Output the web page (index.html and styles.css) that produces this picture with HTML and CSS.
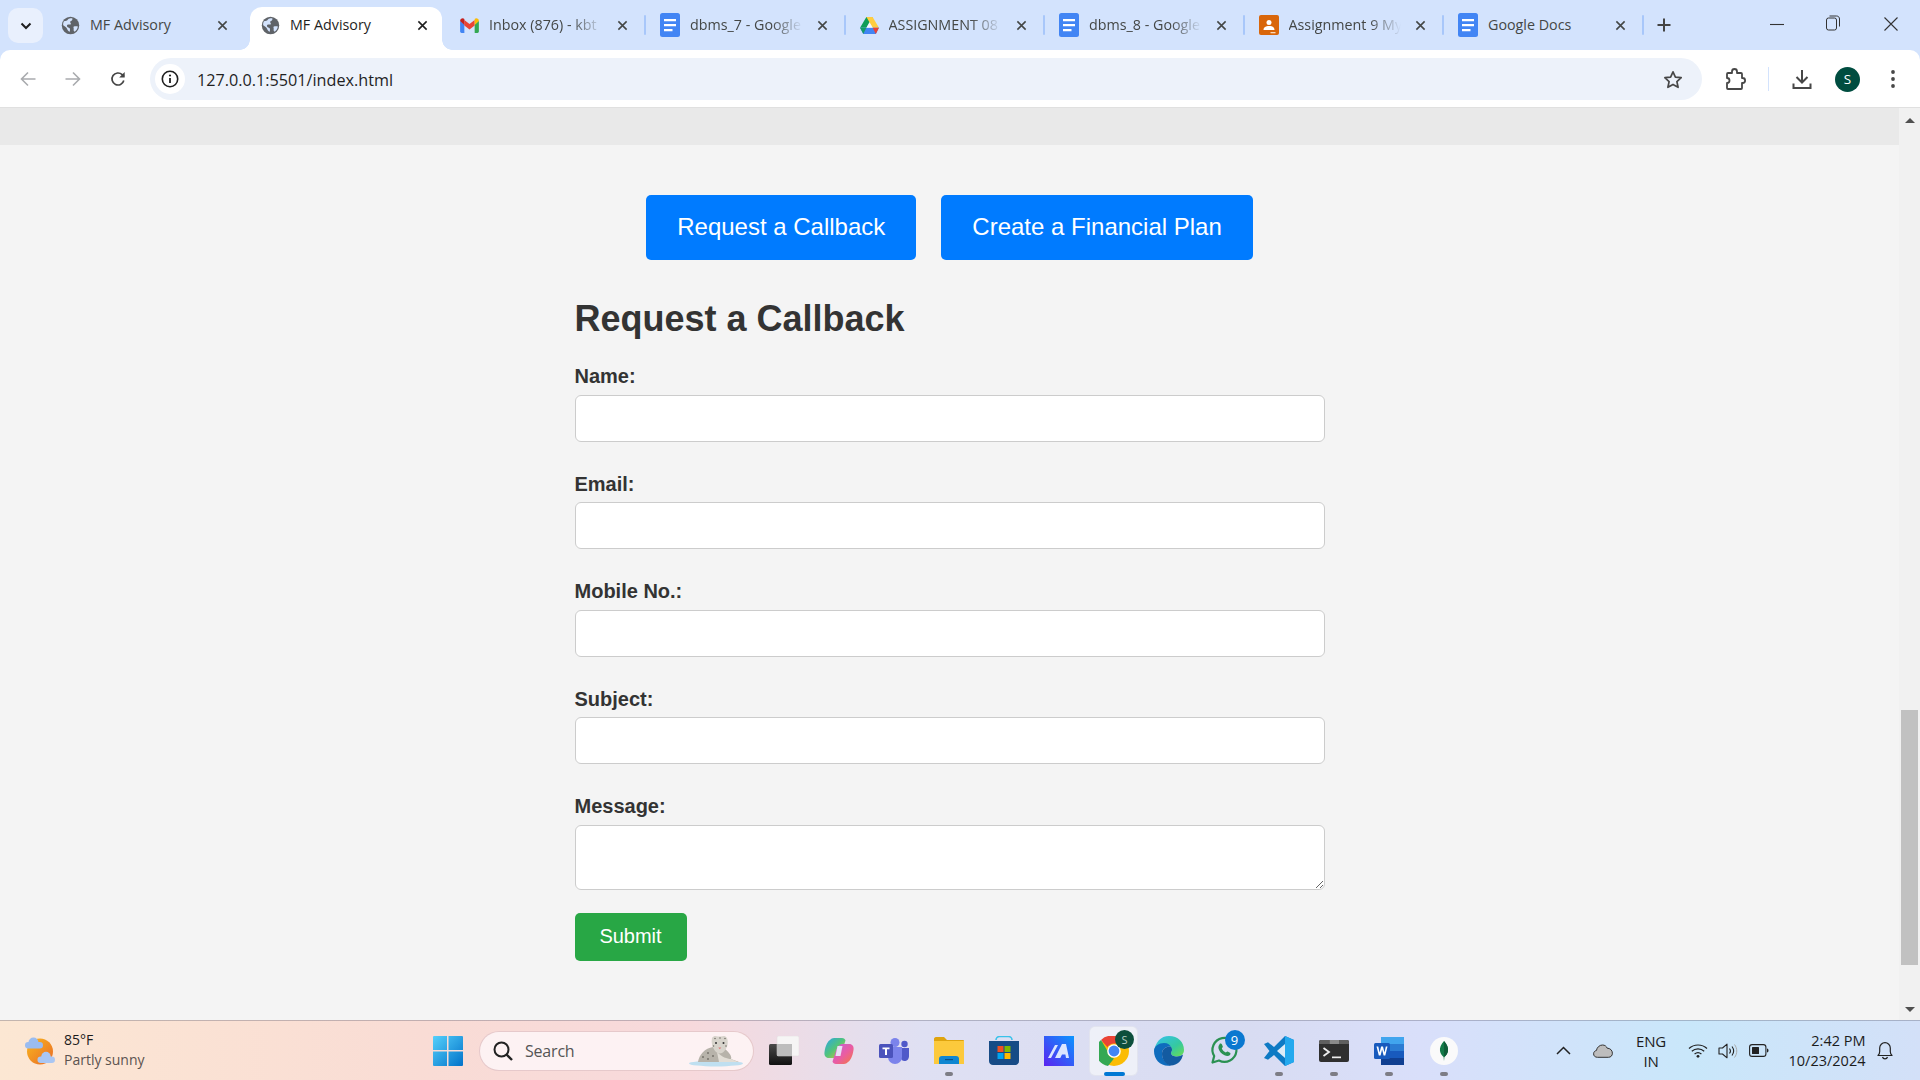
FILE: index.html
```html
<!DOCTYPE html>
<html lang="en">
<head>
<meta charset="utf-8">
<title>MF Advisory</title>
<link rel="stylesheet" href="styles.css">
</head>
<body>
<svg class="defs" width="0" height="0" aria-hidden="true">
  <symbol id="globe" viewBox="0 0 20 20"><circle cx="10" cy="10" r="9.2" fill="#5f6368"/><path d="M3 5.5c2 0 3.5-.5 4.5-2 1-.8 3-1.3 4.500-1 .3 1.200-.4 2.300-1.600 2.800-1 .4-.9 1.500-.2 2.200.8.800-.2 1.700-1.200 1.500-1.700-.3-3.200.2-2.700 1.800.4 1.300 2 1.200 2.800 2 .6.600.4 2.300.1 3.700-1.600-.2-2.400-2-3-3.400-.7-1.500-2.400-2.300-3.900-3.300-.2-1.600.1-3.100.7-4.300z" fill="#d3e3fd"/><path d="M13.500 11c1.300-.3 2.800-.3 4.300 0-.3 2.300-1.600 4.300-3.500 5.500-1.100-.6-1.200-1.700-.9-2.700.2-.9-.8-2 .1-2.800z" fill="#d3e3fd"/></symbol>
  <symbol id="close" viewBox="0 0 12 12"><path d="M1.500 1.500l9 9M10.500 1.500l-9 9" stroke="currentColor" stroke-width="1.700" fill="none"/></symbol>
  <symbol id="docs" viewBox="0 0 20 24"><rect width="20" height="24" rx="2.500" fill="#4285f4"/><path d="M4 6h12v2.200H4zM4 11h12v2.200H4zM4 16h8.500v2.200H4z" fill="#fff"/></symbol>
  <symbol id="gmail" viewBox="0 0 20 16"><path d="M0 3v11.500C0 15.300.7 16 1.500 16H4.500V7z" fill="#4285f4"/><path d="M20 3v11.500c0 .8-.7 1.500-1.500 1.500h-3V7z" fill="#34a853"/><path d="M4.500 8V2L10 6.500 15.500 2v6L10 12.200z" fill="#ea4335"/><path d="M0 3.200C0 1 2.500-.5 4.500 1v6.500z" fill="#c5221f"/><path d="M20 3.200C20 1 17.500-.5 15.500 1v6.500z" fill="#fbbc04"/></symbol>
  <symbol id="drive" viewBox="0 0 20 18"><path d="M6.700 0h6.600l-6.600 11.500H0z" fill="#0f9d58"/><path d="M6.700 0h6.600L20 11.500h-6.600z" fill="#ffcd40"/><path d="M0 11.500h20L16.700 18H3.400z" fill="#4285f4"/><path d="M13.400 11.500H20L16.700 18z" fill="#ea4335"/><path d="M0 11.500h6.700L3.400 18z" fill="#0f9d58" opacity=".9"/><path d="M6.700 11.500h6.700L10 5.600z" fill="#fff" opacity=".75"/></symbol>
  <symbol id="classroom" viewBox="0 0 20 20"><rect width="20" height="20" rx="2" fill="#d9660a"/><circle cx="10" cy="7.500" r="2.500" fill="#fff"/><path d="M4.500 15c0-3 2.500-4 5.500-4s5.500 1 5.500 4z" fill="#fff"/><path d="M11.500 17h5v1.300h-5z" fill="#fbd9b8"/></symbol>
</svg>

<header class="tabstrip">
  <button class="tablist-btn" type="button" aria-label="Search tabs"><svg width="12" height="8" viewBox="0 0 12 8"><path d="M1.500 1.500L6 6l4.500-4.500" stroke="#1f1f1f" stroke-width="2" fill="none"/></svg></button>
  <div class="tab tab-first"><svg class="fav" width="19" height="19"><use href="#globe"/></svg><span class="tab-title">MF Advisory</span><svg class="tab-x" width="11" height="11"><use href="#close"/></svg></div>
  <div class="tab tab-active"><svg class="fav" width="19" height="19"><use href="#globe"/></svg><span class="tab-title">MF Advisory</span><svg class="tab-x" width="11" height="11"><use href="#close"/></svg></div>
  <div class="tab tab-third"><svg class="fav" width="19" height="15"><use href="#gmail"/></svg><span class="tab-title tab-fade">Inbox (876) - kbt</span><svg class="tab-x" width="11" height="11"><use href="#close"/></svg></div>
  <div class="tab"><svg class="fav" width="20" height="24"><use href="#docs"/></svg><span class="tab-title tab-fade">dbms_7 - Google</span><svg class="tab-x" width="11" height="11"><use href="#close"/></svg></div>
  <div class="tab"><svg class="fav" width="19" height="17"><use href="#drive"/></svg><span class="tab-title tab-fade">ASSIGNMENT 08</span><svg class="tab-x" width="11" height="11"><use href="#close"/></svg></div>
  <div class="tab"><svg class="fav" width="20" height="24"><use href="#docs"/></svg><span class="tab-title tab-fade">dbms_8 - Google</span><svg class="tab-x" width="11" height="11"><use href="#close"/></svg></div>
  <div class="tab"><svg class="fav" width="20" height="20"><use href="#classroom"/></svg><span class="tab-title tab-fade">Assignment 9 My</span><svg class="tab-x" width="11" height="11"><use href="#close"/></svg></div>
  <div class="tab"><svg class="fav" width="20" height="24"><use href="#docs"/></svg><span class="tab-title">Google Docs</span><svg class="tab-x" width="11" height="11"><use href="#close"/></svg></div>
  <span class="tab-plus"><svg width="14" height="14" viewBox="0 0 14 14"><path d="M7 .5v13M.5 7h13" stroke="#444" stroke-width="2"/></svg></span>
  <div class="window-ctrls">
    <svg width="14" height="14" viewBox="0 0 14 14"><path d="M0 7.500h14" stroke="#333" stroke-width="1.100"/></svg>
    <svg class="win-restore" width="14" height="16" viewBox="0 0 14 16"><rect x=".5" y="3" width="10" height="12" rx="2" fill="none" stroke="#333"/><path d="M3.500 1h7c1.800 0 3 1.200 3 3v7.500" fill="none" stroke="#333"/></svg>
    <svg width="14" height="14" viewBox="0 0 14 14"><path d="M.5.500l13 13M13.500.500l-13 13" stroke="#333" stroke-width="1.100"/></svg>
  </div>
</header>

<nav class="toolbar">
  <div class="nav-icons">
    <svg width="16" height="16" viewBox="0 0 16 16"><path d="M15.500 8H1.500M8 1.500L1.500 8 8 14.500" stroke="#a9abae" stroke-width="1.600" fill="none"/></svg>
    <svg width="16" height="16" viewBox="0 0 16 16"><path d="M.5 8h14M8 1.500L14.500 8 8 14.500" stroke="#a9abae" stroke-width="1.600" fill="none"/></svg>
    <svg width="16" height="16" viewBox="0 0 16 16"><path d="M13.800 9.500A6 6 0 1 1 12.200 3.700L14 5.500" stroke="#444" stroke-width="1.700" fill="none"/><path d="M14.700 1v5.500H9.200z" fill="#444"/></svg>
  </div>
  <div class="omnibox">
    <span class="site-info"><svg width="18" height="18" viewBox="0 0 18 18"><circle cx="9" cy="9" r="7.700" fill="none" stroke="#1f1f1f" stroke-width="1.600"/><path d="M9 8v5" stroke="#1f1f1f" stroke-width="1.800"/><circle cx="9" cy="5.500" r="1.100" fill="#1f1f1f"/></svg></span>
    <span class="url">127.0.0.1:5501/index.html</span>
    <svg class="star" width="20" height="19" viewBox="0 0 20 19"><path d="M10 1.800l2.400 5.300 5.800.6-4.300 3.900 1.200 5.700L10 14.400l-5.100 2.900 1.200-5.700L1.800 7.700l5.800-.6z" fill="none" stroke="#474747" stroke-width="1.700" stroke-linejoin="round"/></svg>
  </div>
  <div class="tool-icons">
    <svg class="ext" width="21" height="22" viewBox="0 0 21 22"><path d="M3 5h4V3.500a2.500 2.500 0 0 1 5 0V5h4c.6 0 1 .4 1 1v4h.6a2.500 2.500 0 0 1 0 5H17v5c0 .6-.4 1-1 1H3c-.6 0-1-.4-1-1v-5a2.500 2.500 0 0 0 0-5V6c0-.6.4-1 1-1z" fill="none" stroke="#474747" stroke-width="1.800" stroke-linejoin="round"/></svg>
    <span class="tool-sep"></span>
    <svg class="dl" width="20" height="21" viewBox="0 0 20 21"><path d="M10 1v12M4.500 8l5.500 5.500L15.500 8M1.500 14.500v4.500h17v-4.500" fill="none" stroke="#474747" stroke-width="2"/></svg>
    <span class="avatar">S</span>
    <svg class="kebab" width="6" height="20" viewBox="0 0 6 20"><circle cx="3" cy="3" r="1.900" fill="#474747"/><circle cx="3" cy="10" r="1.900" fill="#474747"/><circle cx="3" cy="17" r="1.900" fill="#474747"/></svg>
  </div>
</nav>

<div class="viewport">
  <main class="page">
    <div class="page-strip"></div>
    <div class="actions">
      <button class="btn-primary" type="button">Request a Callback</button>
      <button class="btn-primary" type="button">Create a Financial Plan</button>
    </div>
    <form class="callback-form">
      <h2 class="form-title">Request a Callback</h2>
      <label class="field-label" for="name">Name:</label>
      <input class="field-input" id="name" type="text">
      <label class="field-label" for="email">Email:</label>
      <input class="field-input" id="email" type="text">
      <label class="field-label" for="mobile">Mobile No.:</label>
      <input class="field-input" id="mobile" type="text">
      <label class="field-label" for="subject">Subject:</label>
      <input class="field-input" id="subject" type="text">
      <label class="field-label" for="message">Message:</label>
      <textarea class="field-area" id="message"></textarea>
      <button class="btn-submit" type="button">Submit</button>
    </form>
  </main>
  <aside class="scrollbar">
    <span class="arrow-up"></span>
    <div class="track"><span class="thumb"></span></div>
    <span class="arrow-down"></span>
  </aside>
</div>

<footer class="taskbar">
  <div class="weather">
    <svg width="30" height="30" viewBox="0 0 30 30"><defs><linearGradient id="sun" x1="0" y1="0" x2="1" y2="1"><stop offset="0" stop-color="#f8b81f"/><stop offset="1" stop-color="#ea6a26"/></linearGradient></defs><ellipse cx="15" cy="15.500" rx="13" ry="13" fill="url(#sun)"/><g fill="#9abcf0"><rect x="0" y="6" width="18" height="6.500" rx="3.200"/><circle cx="8.500" cy="6.500" r="5"/></g><g fill="#a9c6f3"><rect x="12.500" y="20.500" width="17.500" height="6.500" rx="3.200"/><circle cx="21" cy="20.500" r="4.700"/></g></svg>
    <div class="weather-text"><span class="temp">85°F</span><span class="cond">Partly sunny</span></div>
  </div>
  <svg class="start" width="30" height="30" viewBox="0 0 30 30" aria-label="Start">
    <defs><linearGradient id="win" x1="0" y1="0" x2="1" y2="1"><stop offset="0" stop-color="#55d0fb"/><stop offset="1" stop-color="#0272c9"/></linearGradient></defs>
    <path d="M1 0h13v14H0V1a1 1 0 0 1 1-1zM15.500 0H29a1 1 0 0 1 1 1v13H15.500zM0 15.500h14V30H1a1 1 0 0 1-1-1zM15.500 15.500H30V29a1 1 0 0 1-1 1H15.500z" fill="url(#win)"/>
  </svg>
  <div class="searchbox">
    <svg width="22" height="22" viewBox="0 0 22 22"><circle cx="9.500" cy="9.500" r="7" fill="none" stroke="#222" stroke-width="2"/><path d="M14.500 14.500L20 20" stroke="#222" stroke-width="2.400"/></svg>
    <span class="search-text">Search</span>
    <svg class="leopard" width="54" height="32" viewBox="0 0 54 32">
      <ellipse cx="27" cy="28.500" rx="27" ry="3" fill="#bfdff0"/>
      <path d="M9 27C10 20 16 13 24 12L36 14C41 18 43 22 42 24L50 27z" fill="#b7b3aa"/>
      <path d="M28 17C33 22 38 24 42 24L49 27H30z" fill="#e2ded6"/>
      <path d="M23 3C25 0 27 1 29 1.500h3C34 1 36 0 38 3 40 8 38 15 33 18 30 19 28 18 26 16 23 12 22 7 23 3z" fill="#d8d4cc"/>
      <circle cx="27" cy="8" r="1" fill="#333"/><circle cx="34.500" cy="8" r="1" fill="#333"/>
      <path d="M29.300 12.500h3L30.800 14.200z" fill="#d97878"/>
      <g fill="#77736b"><circle cx="14" cy="22" r="1"/><circle cx="19" cy="18" r="1"/><circle cx="19" cy="24" r="1"/><circle cx="24" cy="21" r="1"/><circle cx="26" cy="3.500" r=".8"/><circle cx="31" cy="3" r=".8"/><circle cx="36" cy="3.500" r=".8"/><circle cx="24.500" cy="11" r=".8"/><circle cx="37" cy="11" r=".8"/></g>
    </svg>
  </div>
  <div class="task-icons">
    <span class="task">
      <svg width="30" height="30" viewBox="0 0 30 30"><defs><linearGradient id="tv" x1="0" y1="0" x2="0" y2="1"><stop offset="0" stop-color="#4a4a4a"/><stop offset="1" stop-color="#111"/></linearGradient></defs><rect x="0" y="8" width="23" height="21" rx="1.500" fill="url(#tv)"/><rect x="8" y="0" width="22" height="20" rx="1.500" fill="#f6f5f5" stroke="#e0dede" stroke-width=".5"/><rect x="8" y="8" width="15" height="12" fill="#bdbdbd"/></svg>
    </span>
    <span class="task">
      <svg width="30" height="28" viewBox="0 0 30 28"><defs><linearGradient id="cop1" x1="0" y1="0" x2="1" y2="1"><stop offset="0" stop-color="#2aa5e8"/><stop offset=".5" stop-color="#52c47a"/><stop offset="1" stop-color="#f2c230"/></linearGradient><linearGradient id="cop2" x1="0" y1="0" x2="1" y2="1"><stop offset="0" stop-color="#c05de0"/><stop offset=".55" stop-color="#ea5da0"/><stop offset="1" stop-color="#f47b3c"/></linearGradient></defs><path d="M10 1h8c2 0 3 1 3.500 2.500L18 14c-1.500 5-4 7-7 7H5c-3.500 0-5-2.500-4.500-6C1.500 8 4 4 6 3c1-1.300 2.500-2 4-2z" fill="url(#cop1)"/><path d="M20 27h-8c-2 0-3-1-3.500-2.500L12 14c1.500-5 4-7 7-7h6c3.500 0 5 2.500 4.500 6-1 7-3.500 11-5.500 12-1 1.300-2.500 2-4 2z" fill="url(#cop2)"/><path d="M13.500 9h5l-2 10h-5z" fill="#e8e1f6"/></svg>
    </span>
    <span class="task">
      <svg width="30" height="26" viewBox="0 0 30 26"><circle cx="16" cy="4.500" r="4.500" fill="#7b83eb"/><circle cx="25.500" cy="6" r="3.200" fill="#5059c9"/><path d="M22 10h8v8c0 3-2 5-4.500 5-2 0-3.500-1-3.500-3z" fill="#5059c9"/><path d="M9 9h14v10a7 7 0 0 1-14 0z" fill="#7b83eb"/><rect y="6" width="14" height="14" rx="1.500" fill="#4b53bc"/><path d="M3.500 9.500h7v1.800H8V17H6v-5.700H3.500z" fill="#fff"/></svg>
    </span>
    <span class="task task-run">
      <svg width="30" height="27" viewBox="0 0 30 27"><path d="M0 2c0-1 .7-2 2-2h8l3 3h16c.6 0 1 .5 1 1v4H0z" fill="#dfa40e"/><path d="M0 4h30v23H0z" fill="#fcc93c"/><path d="M5 22c0-2 1-3 3-3h14c2 0 3 1 3 3v5H5z" fill="#0f86d1"/><path d="M11 22h8v1.200h-8z" fill="#0b4f86"/></svg>
    </span>
    <span class="task">
      <svg width="30" height="30" viewBox="0 0 30 30"><path d="M7 4a3.500 3.500 0 0 1 3.500-3.500h9A3.500 3.500 0 0 1 23 4" fill="none" stroke="#3ac2ea" stroke-width="1.600"/><path d="M0 5h30v20c0 2.500-2 4-4 4H4c-2 0-4-1.500-4-4z" fill="#174b86"/><rect x="8.500" y="10" width="6" height="6" fill="#f25022"/><rect x="15.500" y="10" width="6" height="6" fill="#7fba00"/><rect x="8.500" y="17" width="6" height="6" fill="#00a4ef"/><rect x="15.500" y="17" width="6" height="6" fill="#ffb900"/></svg>
    </span>
    <span class="task">
      <svg width="30" height="30" viewBox="0 0 30 30"><defs><linearGradient id="ma" x1="0" y1="1" x2="1" y2="0"><stop offset="0" stop-color="#5b23f0"/><stop offset="1" stop-color="#0a95ff"/></linearGradient></defs><rect width="30" height="30" fill="url(#ma)"/><path d="M4 22L11 9h3L7 22zM11 22L18 8h4l3 14h-3l-.6-3.500H18l-1.700 3.500z" fill="#dbe6ff"/></svg>
    </span>
    <span class="task task-active">
      <svg width="30" height="30" viewBox="0 0 30 30"><circle cx="15" cy="15" r="15" fill="#fbbc04"/><path d="M15 0a15 15 0 0 1 13 7.500H15a7.500 7.500 0 0 0-6.500 3.750L2 3.900A15 15 0 0 1 15 0z" fill="#ea4335"/><path d="M2 3.900l6.500 11.100A7.500 7.500 0 0 0 15 22.500L9 30A15 15 0 0 1 2 3.900z" fill="#34a853"/><circle cx="15" cy="15" r="6.800" fill="#fff"/><circle cx="15" cy="15" r="5.400" fill="#4285f4"/></svg>
      <span class="chrome-badge">S</span>
    </span>
    <span class="task">
      <svg width="30" height="30" viewBox="0 0 30 30"><defs><linearGradient id="ed" x1="0" y1="0" x2="1" y2="1"><stop offset="0" stop-color="#35c1f1"/><stop offset=".6" stop-color="#35c9a0"/><stop offset="1" stop-color="#6ede50"/></linearGradient></defs><path d="M15 0c9 0 15 6 15 14 0 4-3 6.500-7 6.500-3 0-6-1-6-3.500 0-1 1-1.500 1-3 0-3-3-5.500-7-5.500-5 0-10 3-11 8C1 6 7 0 15 0z" fill="url(#ed)"/><path d="M0 15c0-5 5-8 10-8 4 0 6 2 7 4-4-1-9 1-9 7 0 5 4 10 9 11.500C7 31 0 24 0 15z" fill="#0f6cbd"/><path d="M8 18c0-6 5-8 9-7 1 1 1 2 1 3 0 1.500-1 2-1 3 0 2.500 3 3.500 6 3.500 2 0 4-.7 6-2-1 6-6 11.500-13 11-5-1.500-8-6.500-8-11.500z" fill="#135ba1"/></svg>
    </span>
    <span class="task">
      <svg width="30" height="31" viewBox="0 0 30 31"><path d="M3.500 27.500l1.700-6.500A12 12 0 1 1 10 25.500z" fill="none" stroke="#2a9152" stroke-width="2.200" stroke-linejoin="round"/><path d="M10.500 9c1-.8 2-.5 2.500.5l.8 2c.2.600-.7 1.500-1 2 .8 1.800 2.300 3.300 4 4 .5-.3 1.200-1.300 1.800-1l2.400 1.200c.7.400.6 1.400 0 2.200-1.300 1.400-3.500 1.300-5.500.3-3-1.500-5.300-4-6-6.800-.3-1.600.1-3.100 1-3.900z" fill="#2a9152"/></svg>
      <span class="wa-badge">9</span>
    </span>
    <span class="task task-run">
      <svg width="30" height="30" viewBox="0 0 30 30"><path d="M21 0l9 4v22l-9 4-11-11-6 4.800L0 22l5.500-7L0 8l4-1.800 6 4.800z" fill="#0e7ac4"/><path d="M21 0l9 4v22l-9 4z" fill="#24a9ee"/><path d="M21 8v14l-8-7z" fill="#f4f8fd" opacity=".9"/></svg>
    </span>
    <span class="task task-run">
      <svg width="30" height="22" viewBox="0 0 30 22"><rect width="30" height="22" rx="2" fill="#2f2f2f"/><path d="M0 2a2 2 0 0 1 2-2h8.500v4H0z" fill="#5f5f5f"/><path d="M10.500 0h10v4h-10z" fill="#8a8a8a"/><path d="M20.500 0H28a2 2 0 0 1 2 2v2h-9.500z" fill="#5f5f5f"/><path d="M4.500 8l5.500 4-5.500 4" fill="none" stroke="#eee" stroke-width="1.800"/><path d="M13 16.500h9v1.700h-9z" fill="#eee"/></svg>
    </span>
    <span class="task task-run">
      <svg width="30" height="28" viewBox="0 0 30 28"><rect x="7" width="23" height="28" rx="1.500" fill="#2b7cd3"/><rect x="7" y="0" width="23" height="7" fill="#41a5ee"/><rect x="7" y="14" width="23" height="7" fill="#185abd"/><rect x="7" y="21" width="23" height="7" fill="#103f91"/><rect y="6" width="16" height="16" rx="1.500" fill="#185abd"/><path d="M2.500 9.500h1.800l1.300 6 1.500-6H9l1.500 6 1.300-6h1.700l-2.200 9H9.600L8.100 12.500 6.600 18.500H4.800z" fill="#fff"/></svg>
    </span>
    <span class="task task-run">
      <svg width="28" height="28" viewBox="0 0 28 28"><circle cx="14" cy="14" r="14" fill="#fafafa"/><path d="M14 4c3 3.500 4.500 6.500 4 10-.4 3-2.500 5-3.600 6l-.4 4-.4-4c-1.100-1-3.200-3-3.600-6-.5-3.500 1-6.500 4-10z" fill="#137a48"/><path d="M14 4c3 3.500 4.500 6.500 4 10-.4 3-2.500 5-3.600 6l-.4-2z" fill="#0f5d38"/></svg>
    </span>
  </div>
  <div class="tray">
    <svg class="tray-chev" width="15" height="9" viewBox="0 0 15 9"><path d="M1 8l6.500-6.500L14 8" fill="none" stroke="#222" stroke-width="1.500"/></svg>
    <svg class="tray-cloud" width="20" height="14" viewBox="0 0 20 14"><path d="M4.500 13.300C2 13.300.6 11.800.6 9.800c0-1.800 1.200-3 2.800-3.300C4 3.300 6.500 1 9.500 1c2.300 0 4 1.300 4.700 3.200 3 0 5.200 2.200 5.200 5 0 2.300-1.500 4.100-4 4.100z" fill="#bdbdbd" stroke="#333" stroke-width="1"/></svg>
    <div class="lang"><span>ENG</span><span>IN</span></div>
    <svg class="tray-wifi" width="20" height="15" viewBox="0 0 20 15"><path d="M1 5.500c5-4.700 13-4.700 18 0M3.800 8.300c3.500-3.200 8.900-3.200 12.400 0M6.600 11c2-1.700 4.800-1.700 6.800 0" fill="none" stroke="#222" stroke-width="1.200"/><circle cx="10" cy="13.300" r="1.400" fill="#222"/></svg>
    <svg class="tray-vol" width="20" height="16" viewBox="0 0 20 16"><path d="M1 5h3.500L9 1.200v13.600L4.500 11H1z" fill="none" stroke="#222" stroke-width="1.100" stroke-linejoin="round"/><path d="M11.500 5.500c1.200 1.500 1.200 3.500 0 5M14 3.500c2 2.700 2 6.300 0 9" fill="none" stroke="#222" stroke-width="1.100"/><path d="M16.500 1.500c3 4 3 9 0 13" fill="none" stroke="#aaa" stroke-width="1"/></svg>
    <svg class="tray-batt" width="20" height="13" viewBox="0 0 20 13"><rect x=".6" y=".6" width="16.300" height="11.800" rx="2.500" fill="none" stroke="#222" stroke-width="1.100"/><rect x="3" y="3" width="7" height="7" rx=".5" fill="#222"/><path d="M18 4.500c1 .2 1.500 1 1.500 2s-.5 1.800-1.500 2z" fill="#222"/></svg>
    <div class="clock"><span>2:42 PM</span><span>10/23/2024</span></div>
    <svg class="tray-bell" width="16" height="19" viewBox="0 0 16 19"><path d="M1 14.500c1-1 1.700-2 1.700-4V7a5.300 5.300 0 0 1 10.600 0v3.500c0 2 .7 3 1.700 4z" fill="none" stroke="#222" stroke-width="1.200" stroke-linejoin="round"/><path d="M5.500 16a2.600 2.600 0 0 0 5 0" fill="none" stroke="#222" stroke-width="1.200"/></svg>
  </div>
</footer>
</body>
</html>
```
FILE: styles.css
```css
* { box-sizing: border-box; }
html, body { margin: 0; height: 100%; overflow: hidden; }
body { display: flex; flex-direction: column; width: 1920px; height: 1080px; font-family: "Liberation Sans", Arial, sans-serif; background: #d3e3fd; }
.defs { display: block; height: 0; }

.tabstrip { display: flex; align-items: flex-start; height: 50px; flex: none; background: #d3e3fd; }
.tablist-btn { width: 35px; height: 35px; margin: 8px 7px 0 8px; padding: 0; border: 0; border-radius: 10px; background: #e9f0fd; display: flex; align-items: center; justify-content: center; }
.tab { position: relative; display: flex; align-items: center; width: 199.5px; height: 43px; margin-top: 7px; padding: 0 17px 7px 15px; color: #444746; flex: none; }
.tab::after { content: ""; position: absolute; right: -1px; top: 8px; width: 2px; height: 20px; background: #a8c7fa; border-radius: 1px; }
.tab-first { width: 200px; padding-left: 11px; padding-right: 22px; }
.tab-first::after { display: none; }
.tab-active { width: 192px; margin-right: 8px; padding-left: 11px; padding-right: 14px; background: #fff; color: #1f1f1f; border-radius: 12px 12px 0 0; }
.tab-active::before, .tab-active::after { content: ""; position: absolute; top: auto; bottom: 0; width: 10px; height: 10px; border-radius: 0; }
.tab-active::before { left: -10px; right: auto; background: radial-gradient(circle at 0 0, transparent 9.5px, #fff 10px); }
.tab-active::after { right: -10px; background: radial-gradient(circle at 100% 0, transparent 9.5px, #fff 10px); }
.tab-third { width: 195px; padding-left: 10px; }
.fav { flex: none; margin-right: 10px; }
.tab-title { flex: 1; min-width: 0; white-space: nowrap; overflow: hidden; font: 14.3px/18px "Open Sans", sans-serif; }
.tab-fade { -webkit-mask-image: linear-gradient(90deg, #000 72%, transparent 100%); mask-image: linear-gradient(90deg, #000 72%, transparent 100%); }
.tab-x { flex: none; margin-left: 14px; }
.tab-plus { margin: 18px 0 0 14px; line-height: 0; }
.window-ctrls { display: flex; gap: 42px; margin: 17px 22px 0 auto; align-items: center; }
.win-restore { margin: -2px 2px 0 0; }

.toolbar { display: flex; align-items: center; height: 58px; padding-top: 1px; flex: none; background: #fff; border-bottom: 1px solid #e0e0e0; border-radius: 10px 10px 0 0; }
.nav-icons { display: flex; gap: 29px; width: 150px; padding-left: 20px; flex: none; }
.omnibox { display: flex; align-items: center; width: 1552px; height: 42px; flex: none; background: #edf2fa; border-radius: 21px; padding: 0 19px 0 5px; }
.site-info { display: flex; align-items: center; justify-content: center; width: 30px; height: 30px; border-radius: 50%; background: #fff; margin-right: 12px; flex: none; }
.url { flex: 1; padding-top: 1px; font: 16.2px/20px "Open Sans", sans-serif; color: #1f1f1f; }
.star { flex: none; }
.tool-icons { display: flex; align-items: center; flex: 1; padding-left: 23px; }
.tool-sep { width: 1px; height: 24px; background: #d3e3fd; margin: 0 23px 0 22px; }
.dl { margin-right: 23px; }
.avatar { display: flex; align-items: center; justify-content: center; width: 25px; height: 25px; border-radius: 50%; background: #004d40; color: #fff; font: 13.5px "Open Sans", sans-serif; margin-right: 30px; }

.viewport { display: flex; flex: 1; min-height: 0; }
.page { width: 1899px; flex: none; background: #f4f4f4; }
.page-strip { height: 37px; background: #e9e9e9; }
.actions { display: flex; justify-content: center; gap: 25px; margin-top: 50px; }
.btn-primary { height: 65px; padding: 0 31px 2px; border: 0; border-radius: 5px; background: #007bff; color: #fff; font: 24px "Liberation Sans", Arial, sans-serif; }
.callback-form { display: flex; flex-direction: column; align-items: flex-start; width: 750px; margin: 37px auto 0; }
.form-title { margin: 0 0 23px; font: bold 36px/44px "Liberation Sans", Arial, sans-serif; color: #333; }
.field-label { font: bold 20px/24px "Liberation Sans", Arial, sans-serif; color: #333; margin-bottom: 6.5px; }
.field-input { display: block; width: 100%; height: 47px; margin-bottom: 30px; padding: 10px; border: 1px solid #ccc; border-radius: 6px; background: #fff; font: 16px "Liberation Sans", Arial, sans-serif; }
.field-area { display: block; width: 100%; height: 65px; margin-bottom: 23.5px; padding: 10px; border: 1px solid #ccc; border-radius: 6px; background: #fff; font: 16px "Liberation Sans", Arial, sans-serif; }
.btn-submit { width: 112px; height: 48px; padding: 0 0 2px; border: 0; border-radius: 5px; background: #28a745; color: #fff; font: 20px "Liberation Sans", Arial, sans-serif; }

.scrollbar { display: flex; flex-direction: column; align-items: center; width: 21px; flex: none; background: #f1f1f1; }
.arrow-up, .arrow-down { width: 0; height: 0; flex: none; border-left: 5px solid transparent; border-right: 5px solid transparent; }
.arrow-up { border-bottom: 5px solid #505050; margin-top: 10px; }
.arrow-down { border-top: 5px solid #505050; margin-bottom: 8px; }
.track { flex: 1; width: 100%; padding: 587px 2px 0; }
.thumb { display: block; height: 255px; background: #c1c1c1; }

.taskbar { display: flex; align-items: center; height: 60px; flex: none; border-top: 1px solid rgba(90, 90, 110, .35); background: linear-gradient(90deg, #fce7d3 0%, #f9dcd5 22%, #f7d9dc 36%, #dfe0f3 48%, #d8dcf2 65%, #d9dffa 74%, #c9e7fa 88%, #d3e0f8 100%); font-family: "Open Sans", sans-serif; color: #1c1c1c; }
.weather { display: flex; align-items: center; gap: 9px; width: 433px; padding-left: 25px; flex: none; }
.weather-text { display: flex; flex-direction: column; padding-bottom: 2px; font-size: 14px; line-height: 20px; }
.cond { color: #5b5350; }
.start { flex: none; }
.searchbox { display: flex; align-items: center; width: 273px; height: 38px; margin-left: 17px; padding: 0 10px 0 12px; flex: none; border-radius: 19px; background: #fdf2f3; box-shadow: 0 0 0 1px #e6c9cb; }
.search-text { flex: 1; margin-left: 11px; font-size: 16px; letter-spacing: -.2px; color: #555; }
.leopard { flex: none; }
.task-icons { display: flex; align-items: center; flex: none; margin-left: 3px; }
.task { position: relative; display: flex; align-items: center; justify-content: center; width: 55px; height: 48px; flex: none; }
.task-run::after { content: ""; position: absolute; left: 24px; bottom: -1px; width: 8px; height: 4px; border-radius: 2px; background: #7d7d85; }
.task-active { width: 47px; margin: 0 4px; background: #eef0f8; border-radius: 5px; box-shadow: 0 0 0 1px #e2e4ef; }
.task-active::after { content: ""; position: absolute; left: 14px; bottom: -1px; width: 21px; height: 4px; border-radius: 2px; background: #0078d4; }
.chrome-badge { position: absolute; top: 3px; right: 3px; display: flex; align-items: center; justify-content: center; width: 19px; height: 19px; border-radius: 50%; background: #0d4f3c; color: #b6cfc6; font-size: 11px; }
.wa-badge { position: absolute; top: 3px; right: 6.5px; display: flex; align-items: center; justify-content: center; width: 20px; height: 20px; border-radius: 50%; background: #0a78d0; color: #fff; font-size: 13px; }
.tray { display: flex; align-items: center; flex: 1; min-width: 0; }
.tray-chev { margin-left: 85px; }
.tray-cloud { margin-left: 22px; }
.lang { display: flex; flex-direction: column; align-items: center; width: 40px; margin-left: 18px; font-size: 15px; line-height: 20px; letter-spacing: -.2px; }
.tray-wifi { margin-left: 17px; }
.tray-vol { margin-left: 10px; }
.tray-batt { margin-left: 11px; }
.clock { display: flex; flex-direction: column; align-items: flex-end; width: 96.5px; font-size: 14.5px; line-height: 20px; }
.tray-bell { margin-left: 11px; }
```
